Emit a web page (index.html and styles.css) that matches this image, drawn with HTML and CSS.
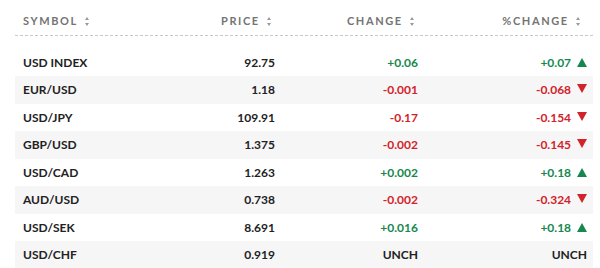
FILE: index.html
```html
<!DOCTYPE html>
<html lang="en">
<head>
    <meta charset="UTF-8">
    <meta name="viewport" content="width=device-width, initial-scale=1.0">
    <title>Currencies</title>
    <link rel="stylesheet" href="styles.css">
</head>
<body>
    <div class="quotes">
        <div class="head">
            <div class="hcell left">Symbol <span class="sort"></span></div>
            <div class="hcell">Price <span class="sort"></span></div>
            <div class="hcell">Change <span class="sort"></span></div>
            <div class="hcell pct">%Change <span class="sort"></span></div>
        </div>
        <div class="dash"></div>

        <div class="rows">
            <div class="row">
                <div class="sym">USD INDEX</div>
                <div class="num">92.75</div>
                <div class="num up">+0.06</div>
                <div class="num pct up">+0.07 <span class="arrow"></span></div>
            </div>
            <div class="row">
                <div class="sym">EUR/USD</div>
                <div class="num">1.18</div>
                <div class="num down">-0.001</div>
                <div class="num pct down">-0.068 <span class="arrow"></span></div>
            </div>
            <div class="row">
                <div class="sym">USD/JPY</div>
                <div class="num">109.91</div>
                <div class="num down">-0.17</div>
                <div class="num pct down">-0.154 <span class="arrow"></span></div>
            </div>
            <div class="row">
                <div class="sym">GBP/USD</div>
                <div class="num">1.375</div>
                <div class="num down">-0.002</div>
                <div class="num pct down">-0.145 <span class="arrow"></span></div>
            </div>
            <div class="row">
                <div class="sym">USD/CAD</div>
                <div class="num">1.263</div>
                <div class="num up">+0.002</div>
                <div class="num pct up">+0.18 <span class="arrow"></span></div>
            </div>
            <div class="row">
                <div class="sym">AUD/USD</div>
                <div class="num">0.738</div>
                <div class="num down">-0.002</div>
                <div class="num pct down">-0.324 <span class="arrow"></span></div>
            </div>
            <div class="row">
                <div class="sym">USD/SEK</div>
                <div class="num">8.691</div>
                <div class="num up">+0.016</div>
                <div class="num pct up">+0.18 <span class="arrow"></span></div>
            </div>
            <div class="row">
                <div class="sym">USD/CHF</div>
                <div class="num">0.919</div>
                <div class="num">UNCH</div>
                <div class="num pct">UNCH</div>
            </div>
        </div>
    </div>
</body>
</html>
```

FILE: styles.css
```css
body {
    margin: 0;
    font-family: Lato, "Liberation Sans", sans-serif;
    color: #222;
    background: #fff;
}
.quotes {
    width: 578px;
    margin-left: 15px;
}
.head,
.row {
    display: grid;
    grid-template-columns: 145px 123px 143px 167px;
    align-items: center;
}
.head {
    height: 35px;
    padding-top: 5px;
    box-sizing: border-box;
}
.hcell {
    font-size: 11px;
    font-weight: 700;
    letter-spacing: 1.6px;
    text-transform: uppercase;
    color: #747474;
    text-align: right;
    padding-right: 11px;
    white-space: nowrap;
}
.hcell.left {
    text-align: left;
    padding-left: 8px;
    padding-right: 0;
}
.hcell.pct {
    padding-right: 12px;
}
.sort {
    display: inline-block;
    width: 5px;
    height: 9px;
    margin-left: 3px;
    vertical-align: -1px;
    position: relative;
}
.sort::before,
.sort::after {
    content: "";
    position: absolute;
    left: 0;
    border-left: 2.5px solid transparent;
    border-right: 2.5px solid transparent;
}
.sort::before {
    top: 0;
    border-bottom: 3.5px solid #999;
}
.sort::after {
    bottom: 0;
    border-top: 3.5px solid #999;
}
.dash {
    height: 1px;
    background: repeating-linear-gradient(90deg, #c8c8c8 0 3px, transparent 3px 5px);
}
.rows {
    margin-top: 12.5px;
}
.row {
    height: 27.5px;
    font-size: 12px;
    font-weight: 700;
}
.row:nth-child(even) {
    background: #f6f6f6;
}
.sym {
    padding-left: 8px;
}
.num {
    text-align: right;
    padding-right: 8px;
}
.num.pct {
    padding-right: 6px;
}
.up {
    color: #16884f;
}
.down {
    color: #d2222a;
}
.arrow {
    display: inline-block;
    width: 0;
    height: 0;
    margin-left: 3px;
    border-left: 5.5px solid transparent;
    border-right: 5.5px solid transparent;
}
.up .arrow {
    border-bottom: 9px solid #16884f;
}
.down .arrow {
    border-top: 9px solid #d2222a;
    vertical-align: 1px;
}
```
